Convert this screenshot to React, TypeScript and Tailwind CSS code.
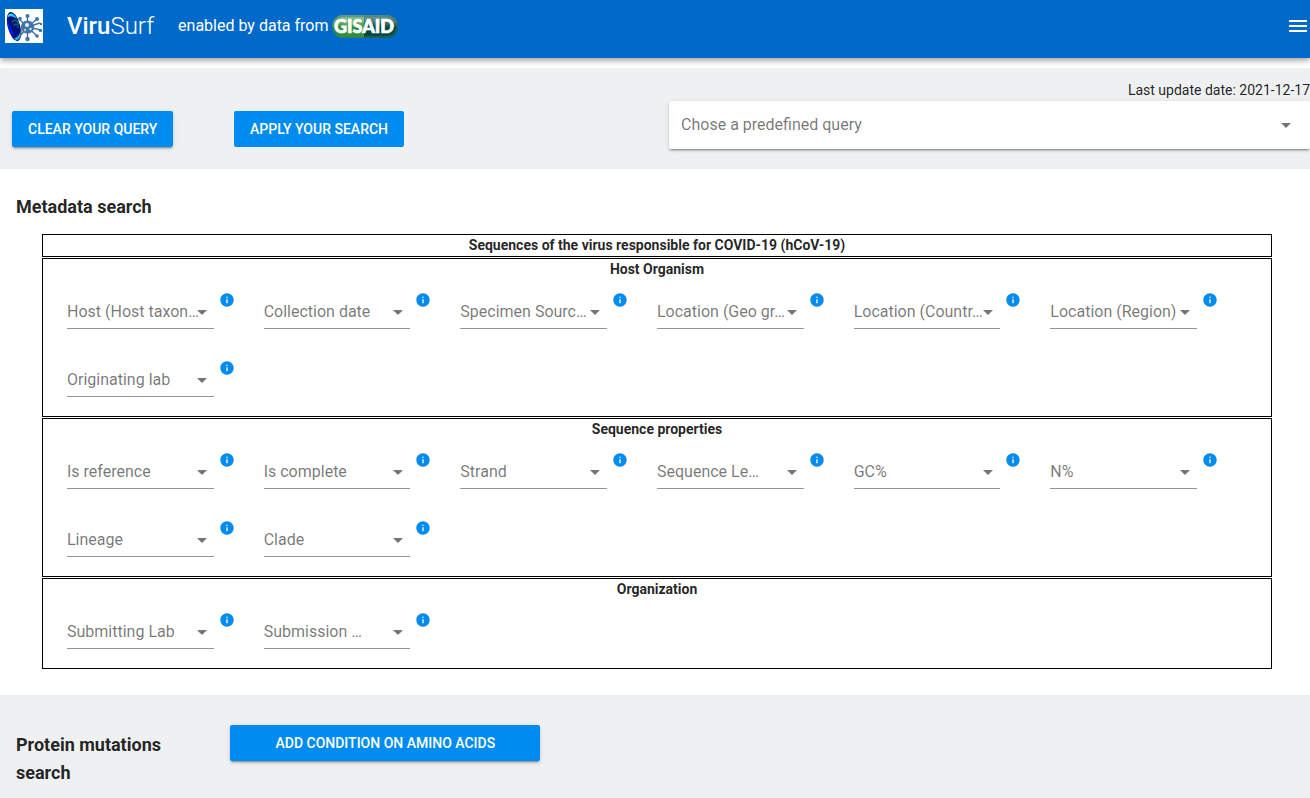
import { MdArrowDropDown, MdInfo, MdMenu } from "react-icons/md";

type Group = {
  title: string;
  fields: string[];
};

const groups: Group[] = [
  {
    title: "Host Organism",
    fields: [
      "Host (Host taxon…",
      "Collection date",
      "Specimen Sourc…",
      "Location (Geo gr…",
      "Location (Countr…",
      "Location (Region)",
      "Originating lab",
    ],
  },
  {
    title: "Sequence properties",
    fields: ["Is reference", "Is complete", "Strand", "Sequence Le…", "GC%", "N%", "Lineage", "Clade"],
  },
  {
    title: "Organization",
    fields: ["Submitting Lab", "Submission …"],
  },
];

const raised = "shadow-[0_3px_1px_-2px_rgba(0,0,0,0.2),0_2px_2px_0_rgba(0,0,0,0.14),0_1px_5px_0_rgba(0,0,0,0.12)]";

function Logo() {
  return (
    <svg viewBox="0 0 38 34" className="h-[34px] w-[38px] shrink-0" role="img" aria-label="ViruSurf logo">
      <rect width="38" height="34" fill="#fff" />
      {/* virus */}
      <g fill="#3f74a8">
        <path
          d="M22.5 18V7M22.5 18V30M22.5 18L36 21M22.5 18L32 10M22.5 18L32 27M22.5 18L15 27M22.5 18L14 10M22.5 18L35 14"
          fill="none"
          stroke="#3f74a8"
          strokeWidth="1.4"
        />
        <circle cx="22.5" cy="18" r="6.6" />
        <circle cx="22.5" cy="7" r="2" />
        <circle cx="22.5" cy="30" r="2.2" />
        <circle cx="35.5" cy="21.5" r="1.7" />
        <circle cx="32" cy="10" r="2" />
        <circle cx="32" cy="27" r="1.8" />
        <circle cx="36" cy="15" r="1.2" />
        <circle cx="15" cy="9.5" r="1.8" />
      </g>
      <circle cx="22" cy="16" r="2" fill="#e4eef6" />
      <circle cx="25.5" cy="20" r="1.2" fill="#dce9f4" />
      <circle cx="20" cy="21" r="1.2" fill="#a9c6df" />
      {/* surf board */}
      <g transform="rotate(-15 9 17.5)">
        <ellipse cx="9" cy="17.5" rx="6.2" ry="15" fill="#00107e" />
        <path d="M5 7C7 2 12 3 14 11C11 7 8 6 5 7Z" fill="#20d4ff" />
        <path d="M6 29C8 33 12 32 14 24C11 28 9 29 6 29Z" fill="#20b8f0" />
        <path d="M4 10C6 18 7 24 6 28C3 24 2 16 4 10Z" fill="#0020e0" />
        <path d="M8 13C11 10 14 12 14 17M9 17C11 14 13 16 13 20" stroke="#0c7068" strokeWidth="1.3" fill="none" />
        <path d="M11 30.500C13 28 15 25 15 22" stroke="#6b6b70" strokeWidth="1" fill="none" />
      </g>
    </svg>
  );
}

function GisaidLogo() {
  return (
    <svg viewBox="0 0 66 23" className="h-[23px] w-[66px]" role="img" aria-label="GISAID">
      <defs>
        <clipPath id="pill">
          <rect width="66" height="23" rx="11.5" />
        </clipPath>
        <linearGradient id="gloss" x1="0" y1="0" x2="0" y2="1">
          <stop offset="0" stopColor="#fff" stopOpacity="0.45" />
          <stop offset="0.3" stopColor="#fff" stopOpacity="0.3" />
          <stop offset="0.55" stopColor="#fff" stopOpacity="0" />
        </linearGradient>
      </defs>
      <g clipPath="url(#pill)">
        <rect width="32" height="23" fill="#2f8f3c" />
        <rect x="32" width="34" height="23" fill="#02483f" />
        <rect width="66" height="23" fill="url(#gloss)" />
        <rect x="1" y="1" width="64" height="21" rx="10.5" fill="none" stroke="#2f7a6a" strokeOpacity="0.5" strokeWidth="2" />
      </g>
      <text
        x="32"
        y="18"
        textAnchor="middle"
        fill="#fff"
        stroke="#fff"
        strokeWidth="0.7"
        fontFamily="Lato, sans-serif"
        fontWeight="900"
        fontSize="18"
      >
        GISAID
      </text>
    </svg>
  );
}

function FilterField({ label }: { label: string }) {
  return (
    <div className="flex h-[68px] items-start pt-3 pr-[29px]">
      <div className="relative mt-1 min-w-0 flex-1">
        <select
          aria-label={label}
          className="block h-[33px] w-full appearance-none border-b border-black/42 bg-transparent text-base text-black/54 outline-none"
        >
          <option>{label}</option>
        </select>
        <MdArrowDropDown className="pointer-events-none absolute top-1 right-0 size-6 text-black/54" />
      </div>
      <button type="button" aria-label={`About ${label}`} className="ml-[5px] text-[#008bf0]">
        <MdInfo className="size-4" />
      </button>
    </div>
  );
}

export default function App() {
  return (
    <div className="flex min-h-screen flex-col bg-white font-[Roboto,sans-serif] text-sm text-black/87">
      <header className="mb-[10px] flex h-[58px] shrink-0 items-center bg-[#0069ca] pb-1.5 pl-[5px] text-white shadow-[0_2px_4px_-1px_rgba(0,0,0,0.2),0_4px_5px_0_rgba(0,0,0,0.14),0_1px_10px_0_rgba(0,0,0,0.12)]">
        <Logo />
        <h1 className="ml-6 text-2xl">
          <span className="font-medium">Viru</span>
          <span className="font-light">Surf</span>
        </h1>
        <div className="ml-6 flex items-center gap-[3px] text-base">
          <span>enabled by data from</span>
          <GisaidLogo />
        </div>
        <button type="button" aria-label="Menu" className="ml-auto">
          <MdMenu className="size-6" />
        </button>
      </header>

      <section className="flex justify-between bg-[#eff0f2] pt-3 pb-5">
        <div className="flex items-start pt-[31px] pl-3">
          <div className="w-[222px]">
            <button
              type="button"
              className={`h-9 rounded-xs bg-[#008bf0] px-4 text-sm font-medium text-white uppercase ${raised}`}
            >
              Clear your query
            </button>
          </div>
          <button type="button" className="h-9 rounded-xs bg-[#008bf0] px-4 text-sm font-medium text-white uppercase">
            Apply your search
          </button>
        </div>
        <div className="w-[49%]">
          <p className="text-right leading-[21px]">Last update date: 2021-12-17</p>
          <div className="relative ml-px">
            <select
              aria-label="Chose a predefined query"
              className={`block h-12 w-full appearance-none rounded-xs bg-white px-3 text-base text-black/54 outline-none ${raised}`}
            >
              <option>Chose a predefined query</option>
            </select>
            <MdArrowDropDown className="pointer-events-none absolute top-3 right-3 size-6 text-black/54" />
          </div>
        </div>
      </section>

      <section className="pt-6 pb-[26px]">
        <h2 className="px-4 text-lg font-bold">Metadata search</h2>
        <div className="mt-[13px] mr-[38px] ml-[42px] flex flex-col gap-px">
          <h3 className="border border-black text-center leading-[21px] font-bold">
            Sequences of the virus responsible for COVID-19 (hCoV-19)
          </h3>
          {groups.map((group) => (
            <div key={group.title} className="border border-black">
              <h3 className="text-center leading-[21px] font-bold">{group.title}</h3>
              <div className="grid grid-cols-6 px-6">
                {group.fields.map((field) => (
                  <FilterField key={field} label={field} />
                ))}
              </div>
            </div>
          ))}
        </div>
      </section>

      <section className="flex flex-1 items-start bg-[#eff0f2]">
        <h2 className="w-1/6 px-4 pt-9 text-lg font-bold">Protein mutations search</h2>
        <div className="pt-[30px] pl-3">
          <button
            type="button"
            className={`h-9 w-[310px] rounded-xs bg-[#008bf0] text-sm font-medium text-white uppercase ${raised}`}
          >
            Add condition on amino acids
          </button>
        </div>
      </section>
    </div>
  );
}
